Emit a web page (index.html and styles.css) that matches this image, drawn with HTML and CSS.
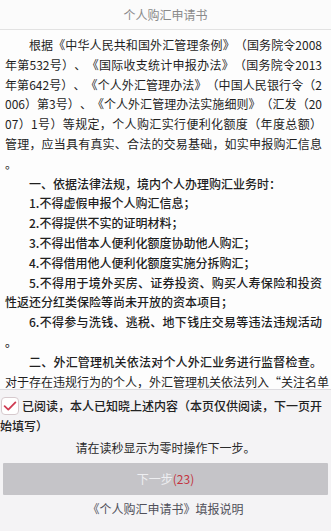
FILE: index.html
```html
<!DOCTYPE html>
<html lang="zh-CN">
<head>
<meta charset="utf-8">
<title>个人购汇申请书</title>
<link rel="stylesheet" href="styles.css">
</head>
<body>
<div class="page">
  <header class="topbar">个人购汇申请书</header>
  <main class="content">
    <p class="para indent just">根据《中华人民共和国外汇管理条例》（国务院令2008<br>年第532号）、《国际收支统计申报办法》（国务院令2013<br>年第642号）、《个人外汇管理办法》（中国人民银行令（2<br>006）第3号）、《个人外汇管理办法实施细则》（汇发（20<br>07）1号）等规定，个人购汇实行便利化额度（年度总额）<br>管理，应当具有真实、合法的交易基础，如实申报购汇信息<br>。</p>
    <p class="para indent bold">一、依据法律法规，境内个人办理购汇业务时：</p>
    <p class="para indent bold">1.不得虚假申报个人购汇信息；</p>
    <p class="para indent bold">2.不得提供不实的证明材料；</p>
    <p class="para indent bold">3.不得出借本人便利化额度协助他人购汇；</p>
    <p class="para indent bold">4.不得借用他人便利化额度实施分拆购汇；</p>
    <p class="para indent bold"><span class="line">5.不得用于境外买房、证券投资、购买人寿保险和投资</span>性返还分红类保险等尚未开放的资本项目；</p>
    <p class="para indent bold just">6.不得参与洗钱、逃税、地下钱庄交易等违法违规活动<br>。</p>
    <p class="para indent just"><strong>二、外汇管理机关依法对个人外汇业务进行监督检查。</strong><br>对于存在违规行为的个人，外汇管理机关依法列入“关注名单</p>
  </main>
  <footer class="bottom">
    <p class="agree"><span class="checkbox"><svg viewBox="0 0 18 18" width="18" height="18"><rect x="0.5" y="0.5" width="17" height="17" rx="3.5" fill="#fff" stroke="#d6c9cd"/><path d="M3.6 9.2 L7.3 12.6 L14.4 5.4" fill="none" stroke="#cf3b52" stroke-width="1.8" stroke-linecap="round" stroke-linejoin="round"/></svg></span>已阅读，本人已知晓上述内容（本页仅供阅读，下一页开始填写）</p>
    <p class="hint">请在读秒显示为零时操作下一步。</p>
    <button class="next" type="button">下一步<span class="count">(23)</span></button>
    <p class="guide">《个人购汇申请书》填报说明</p>
  </footer>
</div>
</body>
</html>
```

FILE: styles.css
```css
* {
  box-sizing: border-box;
}

html, body {
  margin: 0;
  padding: 0;
}

body {
  font-family: "Noto Sans CJK SC", "Noto Sans", sans-serif;
  color: #1f1f1f;
  background: #fdfdfd;
  text-spacing-trim: space-all;
}

.page {
  width: 331px;
  height: 531px;
  display: flex;
  flex-direction: column;
  overflow: hidden;
}

.topbar {
  height: 30px;
  flex: 0 0 30px;
  border-bottom: 1px solid #e2e2e2;
  background: #fbfbfb;
  color: #8a8a8a;
  font-size: 12px;
  line-height: 29px;
  text-align: center;
}

.content {
  flex: 0 0 359px;
  height: 359px;
  overflow: hidden;
  padding: 5px 9px 0 5px;
  font-size: 12px;
  line-height: 19.8px;
  background: #fdfdfd;
}

.para {
  margin: 0;
  white-space: nowrap;
}

.indent {
  text-indent: 2em;
}

.just {
  text-align: justify;
  text-align-last: justify;
}

.line {
  display: block;
  text-align: justify;
  text-align-last: justify;
}

.bold,
.para strong {
  font-weight: 500;
}

.bottom {
  flex: 1 1 auto;
  border-top: 1px solid #dcdbdf;
  background: #f4f3f5;
  padding: 6px 0 0 0;
  font-size: 12px;
}

.agree {
  margin: 0;
  padding-right: 6px;
  line-height: 19.5px;
  font-weight: 500;
  color: #222;
}

.checkbox {
  display: inline-block;
  width: 18px;
  height: 18px;
  margin: 0 3px 0 1px;
  vertical-align: -4px;
  text-indent: 0;
}

.checkbox svg {
  display: block;
}

.hint {
  margin: 3px 0 0;
  line-height: 20px;
  text-align: center;
  color: #2a2a2a;
}

.next {
  display: block;
  width: 325px;
  height: 32px;
  margin: 5px 3px 0;
  padding: 0;
  border: 0;
  border-radius: 1px;
  background: #c5c4c8;
  color: #eeeef1;
  font-family: inherit;
  font-size: 12px;
  line-height: 32px;
  text-align: center;
}

.count {
  color: #c3343f;
}

.guide {
  margin: 4px 0 0;
  line-height: 20px;
  text-align: center;
  color: #50505a;
}
```
